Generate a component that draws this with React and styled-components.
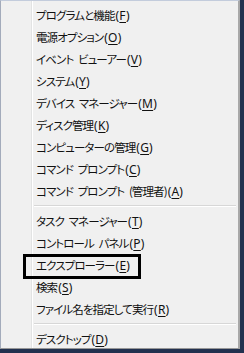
import styled, { createGlobalStyle } from "styled-components";

const GlobalStyle = createGlobalStyle`
  body {
    margin: 0;
    background: #22314f;
  }
`;

const Menu = styled.div`
  box-sizing: border-box;
  width: 240px;
  height: 349px;
  padding: 3px 2px 0 1px;
  border: 1px solid #979797;
  border-top-color: #c3ccdc;
  border-left-color: #a3abbb;
  border-right-width: 2px;
  border-right-color: #a8a8a8;
  background: linear-gradient(
    to right,
    #f0f0f0 30px,
    #e2e3e3 30px,
    #e2e3e3 31px,
    #ffffff 31px,
    #ffffff 32px,
    #f0f0f0 32px
  );
  display: flex;
  flex-direction: column;
  font-family: "Noto Sans CJK JP", "Noto Sans", sans-serif;
  font-size: 11.5px;
  font-feature-settings: "palt" 1;
  color: #111;
`;

const Item = styled.div`
  position: relative;
  height: 22px;
  display: flex;
  align-items: center;
  padding-left: 34px;
  white-space: pre;

  ${({ $marked }) =>
    $marked &&
    `
    &::after {
      content: "";
      position: absolute;
      left: 21px;
      top: 0;
      width: 118px;
      height: 25px;
      box-sizing: border-box;
      border: 3px solid #000;
    }
  `}
`;

const Label = styled.span`
  letter-spacing: -0.9px;
  word-spacing: 3px;
  margin-right: 1px;
`;

const Suffix = styled.span`
  font-family: "Noto Sans", "DejaVu Sans", sans-serif;
  font-size: 12px;
  letter-spacing: 0.2px;
`;

const Key = styled.span`
  text-decoration: underline;
  text-underline-offset: 2px;
`;

const Separator = styled.div`
  height: 8px;
  margin-left: 32px;
  display: flex;
  flex-direction: column;
  justify-content: center;

  &::before {
    content: "";
    height: 1px;
    background: #d7d7d7;
    border-bottom: 1px solid #ffffff;
  }
`;

const groups = [
  [
    ["プログラムと機能", "F"],
    ["電源オプション", "O"],
    ["イベント ビューアー", "V"],
    ["システム", "Y"],
    ["デバイス マネージャー", "M"],
    ["ディスク管理", "K"],
    ["コンピューターの管理", "G"],
    ["コマンド プロンプト", "C"],
    ["コマンド プロンプト (管理者)", "A"],
  ],
  [
    ["タスク マネージャー", "T"],
    ["コントロール パネル", "P"],
    ["エクスプローラー", "E", true],
    ["検索", "S"],
    ["ファイル名を指定して実行", "R"],
  ],
  [["デスクトップ", "D"]],
];

const App = () => {
  return (
    <>
      <GlobalStyle />
      <Menu>
        {groups.map((group, gi) => (
          <div key={gi}>
            {gi > 0 && <Separator />}
            {group.map(([label, key, marked]) => (
              <Item key={label} $marked={marked}>
                <Label>{label}</Label>
                <Suffix>
                  (<Key>{key}</Key>)
                </Suffix>
              </Item>
            ))}
          </div>
        ))}
      </Menu>
    </>
  );
};

export default App;
